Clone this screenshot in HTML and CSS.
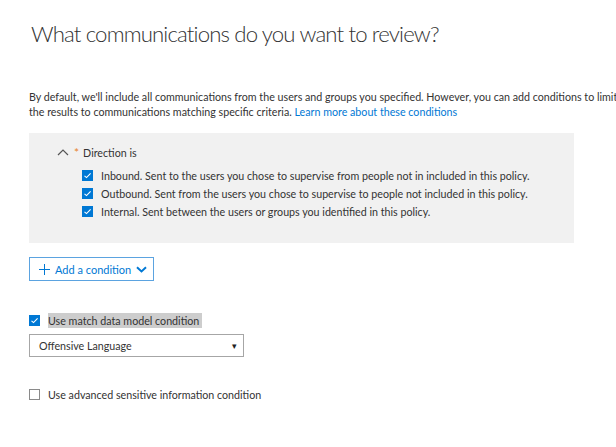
FILE: index.html
```html
<!DOCTYPE html>
<html lang="en">
<head>
    <meta charset="UTF-8">
    <title>What communications do you want to review?</title>
    <link rel="stylesheet" href="styles.css">
</head>
<body>
    <div class="frame">
        <div class="edge">
            <div class="edge-top"></div>
            <div class="edge-bottom"></div>
        </div>
        <main class="page">
            <h1>What communications do you want to review?</h1>
            <p class="intro">By default, we'll include all communications from the users and groups you specified. However, you can add conditions to limit the results to communications matching specific criteria. <a href="#">Learn more about these conditions</a></p>

            <section class="condition">
                <div class="condition-head">
                    <svg class="chevron-up" width="12" height="8" viewBox="0 0 12 8"><path d="M1 7 L6 2 L11 7" fill="none" stroke="#555" stroke-width="1.2"/></svg>
                    <span class="required">*</span>
                    <span>Direction is</span>
                </div>
                <ul class="options">
                    <li><span class="box checked"><svg width="11" height="11" viewBox="0 0 11 11"><path d="M2.5 5.8 L4.5 7.6 L8.6 3.4" fill="none" stroke="#fff" stroke-width="1.1"/></svg></span>Inbound. Sent to the users you chose to supervise from people not in included in this policy.</li>
                    <li><span class="box checked"><svg width="11" height="11" viewBox="0 0 11 11"><path d="M2.5 5.8 L4.5 7.6 L8.6 3.4" fill="none" stroke="#fff" stroke-width="1.1"/></svg></span>Outbound. Sent from the users you chose to supervise to people not included in this policy.</li>
                    <li><span class="box checked"><svg width="11" height="11" viewBox="0 0 11 11"><path d="M2.5 5.8 L4.5 7.6 L8.6 3.4" fill="none" stroke="#fff" stroke-width="1.1"/></svg></span>Internal. Sent between the users or groups you identified in this policy.</li>
                </ul>
            </section>

            <button class="add-btn">
                <svg width="11" height="11" viewBox="0 0 11 11"><path d="M5.5 0 V11 M0 5.5 H11" stroke="#0078d4" stroke-width="1"/></svg>
                <span>Add a condition</span>
                <svg width="11" height="7" viewBox="0 0 11 7"><path d="M1 1.2 L5.5 5.4 L10 1.2" fill="none" stroke="#0078d4" stroke-width="2"/></svg>
            </button>

            <div class="check-row first">
                <span class="box checked"><svg width="11" height="11" viewBox="0 0 11 11"><path d="M2.5 5.8 L4.5 7.6 L8.6 3.4" fill="none" stroke="#fff" stroke-width="1.1"/></svg></span>
                <span class="label selected">Use match data model condition</span>
            </div>
            <div class="select">
                <span>Offensive Language</span>
                <span class="caret">&#9662;</span>
            </div>

            <div class="check-row last">
                <span class="box"></span>
                <span class="label">Use advanced sensitive information condition</span>
            </div>
        </main>
    </div>
</body>
</html>
```

FILE: styles.css
```css
* {
    margin: 0;
    padding: 0;
    box-sizing: border-box;
}

body {
    font-family: Lato, "Open Sans", sans-serif;
    color: #333;
    background: #fff;
    overflow: hidden;
}

.frame {
    display: flex;
    min-height: 447px;
}

.edge {
    width: 2px;
    display: flex;
    flex-direction: column;
}

.edge-top {
    height: 173px;
    background: #5a5a5a;
}

.edge-bottom {
    margin-top: 52px;
    flex: 1;
    background: #5a5a5a;
}

.page {
    flex: 1;
    padding-left: 29px;
}

h1 {
    font-weight: 300;
    font-size: 22.2px;
    letter-spacing: -0.85px;
    line-height: 30px;
    margin-top: 19px;
    padding-left: 2px;
    color: #333;
    white-space: nowrap;
}

.intro {
    margin-top: 40px;
    font-size: 10.7px;
    line-height: 15px;
    width: 590px;
}

.intro a {
    color: #0078d4;
    text-decoration: none;
}

.condition {
    margin-top: 14px;
    width: 545px;
    background: #f1f1f1;
    padding: 10px 0 23px 28px;
    font-size: 10.7px;
}

.condition-head {
    display: flex;
    align-items: center;
    height: 18px;
}

.chevron-up {
    margin-right: 5px;
}

.required {
    color: #e8812c;
    font-size: 12px;
    margin-right: 4px;
}

.options {
    list-style: none;
    margin-top: 5px;
    padding-left: 25px;
}

.options li {
    display: flex;
    align-items: center;
    height: 18px;
    white-space: nowrap;
}

.box {
    width: 11px;
    height: 11px;
    flex: none;
    border: 1px solid #8a8a8a;
    background: #fff;
    margin-right: 8px;
    display: flex;
}

.box.checked {
    border: none;
    background: #0078d4;
}

.add-btn {
    margin-top: 14px;
    height: 24px;
    width: 125px;
    border: 1px solid #5ba3e0;
    background: #fff;
    color: #0078d4;
    font-family: inherit;
    font-size: 11px;
    white-space: nowrap;
    display: flex;
    align-items: center;
    padding-left: 9px;
    gap: 5px;
}

.check-row {
    display: flex;
    align-items: center;
    font-size: 10.7px;
    height: 15px;
}

.check-row.first {
    margin-top: 32px;
}

.check-row.last {
    margin-top: 30px;
}

.label {
    padding: 0 3px 0 0;
    line-height: 15px;
}

.label.selected {
    background: #cdcdcd;
}

.select {
    margin-top: 6px;
    width: 215px;
    height: 23px;
    border: 1px solid #a6a6a6;
    display: flex;
    align-items: center;
    justify-content: space-between;
    padding: 0 6px 0 9px;
    font-size: 10.7px;
}

.caret {
    font-size: 9px;
    color: #222;
}
```
